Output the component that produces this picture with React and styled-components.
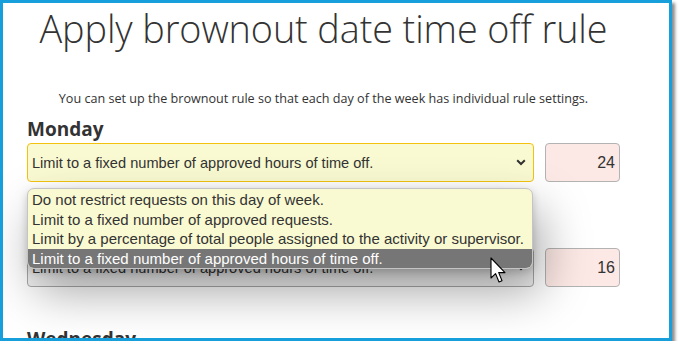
import React from "react";
import styled, { createGlobalStyle } from "styled-components";

const Global = createGlobalStyle`
  html, body { margin: 0; padding: 0; background: #ffffff; }
  body { font-family: "Liberation Sans", Arial, sans-serif; }
`;

const Frame = styled.div`
  box-sizing: border-box;
  width: 672px;
  height: 341px;
  border: 3px solid #169fdb;
  background: #ffffff;
  box-shadow: 3px 3px 3px rgba(0, 0, 0, 0.45);
  overflow: hidden;
  position: relative;
`;

const Column = styled.div`
  width: 593px;
  margin-left: 24px;
  display: flex;
  flex-direction: column;
`;

const Title = styled.h1`
  margin: 3px 0 0;
  font-family: "Open Sans", sans-serif;
  font-weight: 300;
  font-size: 37.8px;
  line-height: 46px;
  color: #333333;
  text-align: center;
  white-space: nowrap;
  letter-spacing: -0.1px;
`;

const Subtitle = styled.p`
  margin: 38px 0 0;
  font-family: "Open Sans", sans-serif;
  font-size: 12.6px;
  line-height: 18px;
  color: #333333;
  text-align: center;
  white-space: nowrap;
`;

const Day = styled.section`
  position: relative;
  display: flex;
  flex-direction: column;
  margin-top: ${(p) => p.$gap}px;
`;

const DayLabel = styled.h2`
  margin: 0;
  font-family: "Open Sans", sans-serif;
  font-weight: 700;
  font-size: 19px;
  line-height: 22px;
  color: #333333;
`;

const Row = styled.div`
  display: flex;
  gap: 11px;
  margin-top: 3px;
`;

const Select = styled.div`
  box-sizing: border-box;
  width: 507px;
  height: 39px;
  display: flex;
  align-items: center;
  justify-content: space-between;
  padding: 0 7px 0 4px;
  border: 1px solid ${(p) => (p.$focused ? "#f3c20f" : "#a9a9a9")};
  border-radius: 4px;
  background: ${(p) => (p.$focused ? "#fafad2" : "#f2f2f2")};
  font-size: 14.6px;
  color: #333333;
`;

const Chevron = styled.svg`
  width: 10px;
  height: 7px;
  flex: none;
`;

const NumberBox = styled.div`
  box-sizing: border-box;
  width: 75px;
  height: 39px;
  display: flex;
  align-items: center;
  justify-content: flex-end;
  padding-right: 4px;
  border: 1px solid #b3b3b3;
  border-radius: 4px;
  background: #fce8e4;
  font-size: 16px;
  color: #333333;
`;

const Menu = styled.ul`
  position: absolute;
  z-index: 5;
  left: 0;
  top: 70px;
  box-sizing: border-box;
  width: 506px;
  margin: 0;
  padding: 1px 0 0;
  list-style: none;
  background: #fafad2;
  border: 1px solid #c4c4c4;
  border-radius: 7px;
  overflow: hidden;
  box-shadow: 8px 22px 48px rgba(0, 0, 0, 0.36), 0 3px 8px rgba(0, 0, 0, 0.18);
`;

const Option = styled.li`
  height: 19.5px;
  line-height: 19.5px;
  padding-left: 4px;
  font-size: 15px;
  white-space: nowrap;
  color: ${(p) => (p.$active ? "#ffffff" : "#333333")};
  background: ${(p) => (p.$active ? "#767676" : "transparent")};
`;

const Cursor = styled.svg`
  position: absolute;
  z-index: 10;
  left: 487px;
  top: 254px;
  width: 18px;
  height: 27px;
`;

const options = [
  "Do not restrict requests on this day of week.",
  "Limit to a fixed number of approved requests.",
  "Limit by a percentage of total people assigned to the activity or supervisor.",
  "Limit to a fixed number of approved hours of time off.",
];

const ChevronIcon = () => (
  <Chevron viewBox="0 0 10 7">
    <path d="M1.2 1.2 L5 5 L8.8 1.2" fill="none" stroke="#333" strokeWidth="2" />
  </Chevron>
);

export default function App() {
  return (
    <>
      <Global />
      <Frame>
        <Column>
          <Title>Apply brownout date time off rule</Title>
          <Subtitle>
            You can set up the brownout rule so that each day of the week has individual rule settings.
          </Subtitle>
          <Day $gap={10}>
            <DayLabel>Monday</DayLabel>
            <Row>
              <Select $focused>
                <span>Limit to a fixed number of approved hours of time off.</span>
                <ChevronIcon />
              </Select>
              <NumberBox>24</NumberBox>
            </Row>
            <Menu>
              {options.map((o, i) => (
                <Option key={o} $active={i === 3}>
                  {o}
                </Option>
              ))}
            </Menu>
          </Day>
          <Day $gap={41}>
            <DayLabel>Tuesday</DayLabel>
            <Row>
              <Select>
                <span>Limit to a fixed number of approved hours of time off.</span>
                <ChevronIcon />
              </Select>
              <NumberBox>16</NumberBox>
            </Row>
          </Day>
          <Day $gap={41}>
            <DayLabel>Wednesday</DayLabel>
          </Day>
        </Column>
        <Cursor viewBox="0 0 18 27">
          <path
            d="M1 1 L1 21 L5.6 16.6 L9 25 L12 23.8 L8.7 15.6 L15 15.6 Z"
            fill="#ffffff"
            stroke="#000000"
            strokeWidth="1.1"
            strokeLinejoin="round"
          />
        </Cursor>
      </Frame>
    </>
  );
}
